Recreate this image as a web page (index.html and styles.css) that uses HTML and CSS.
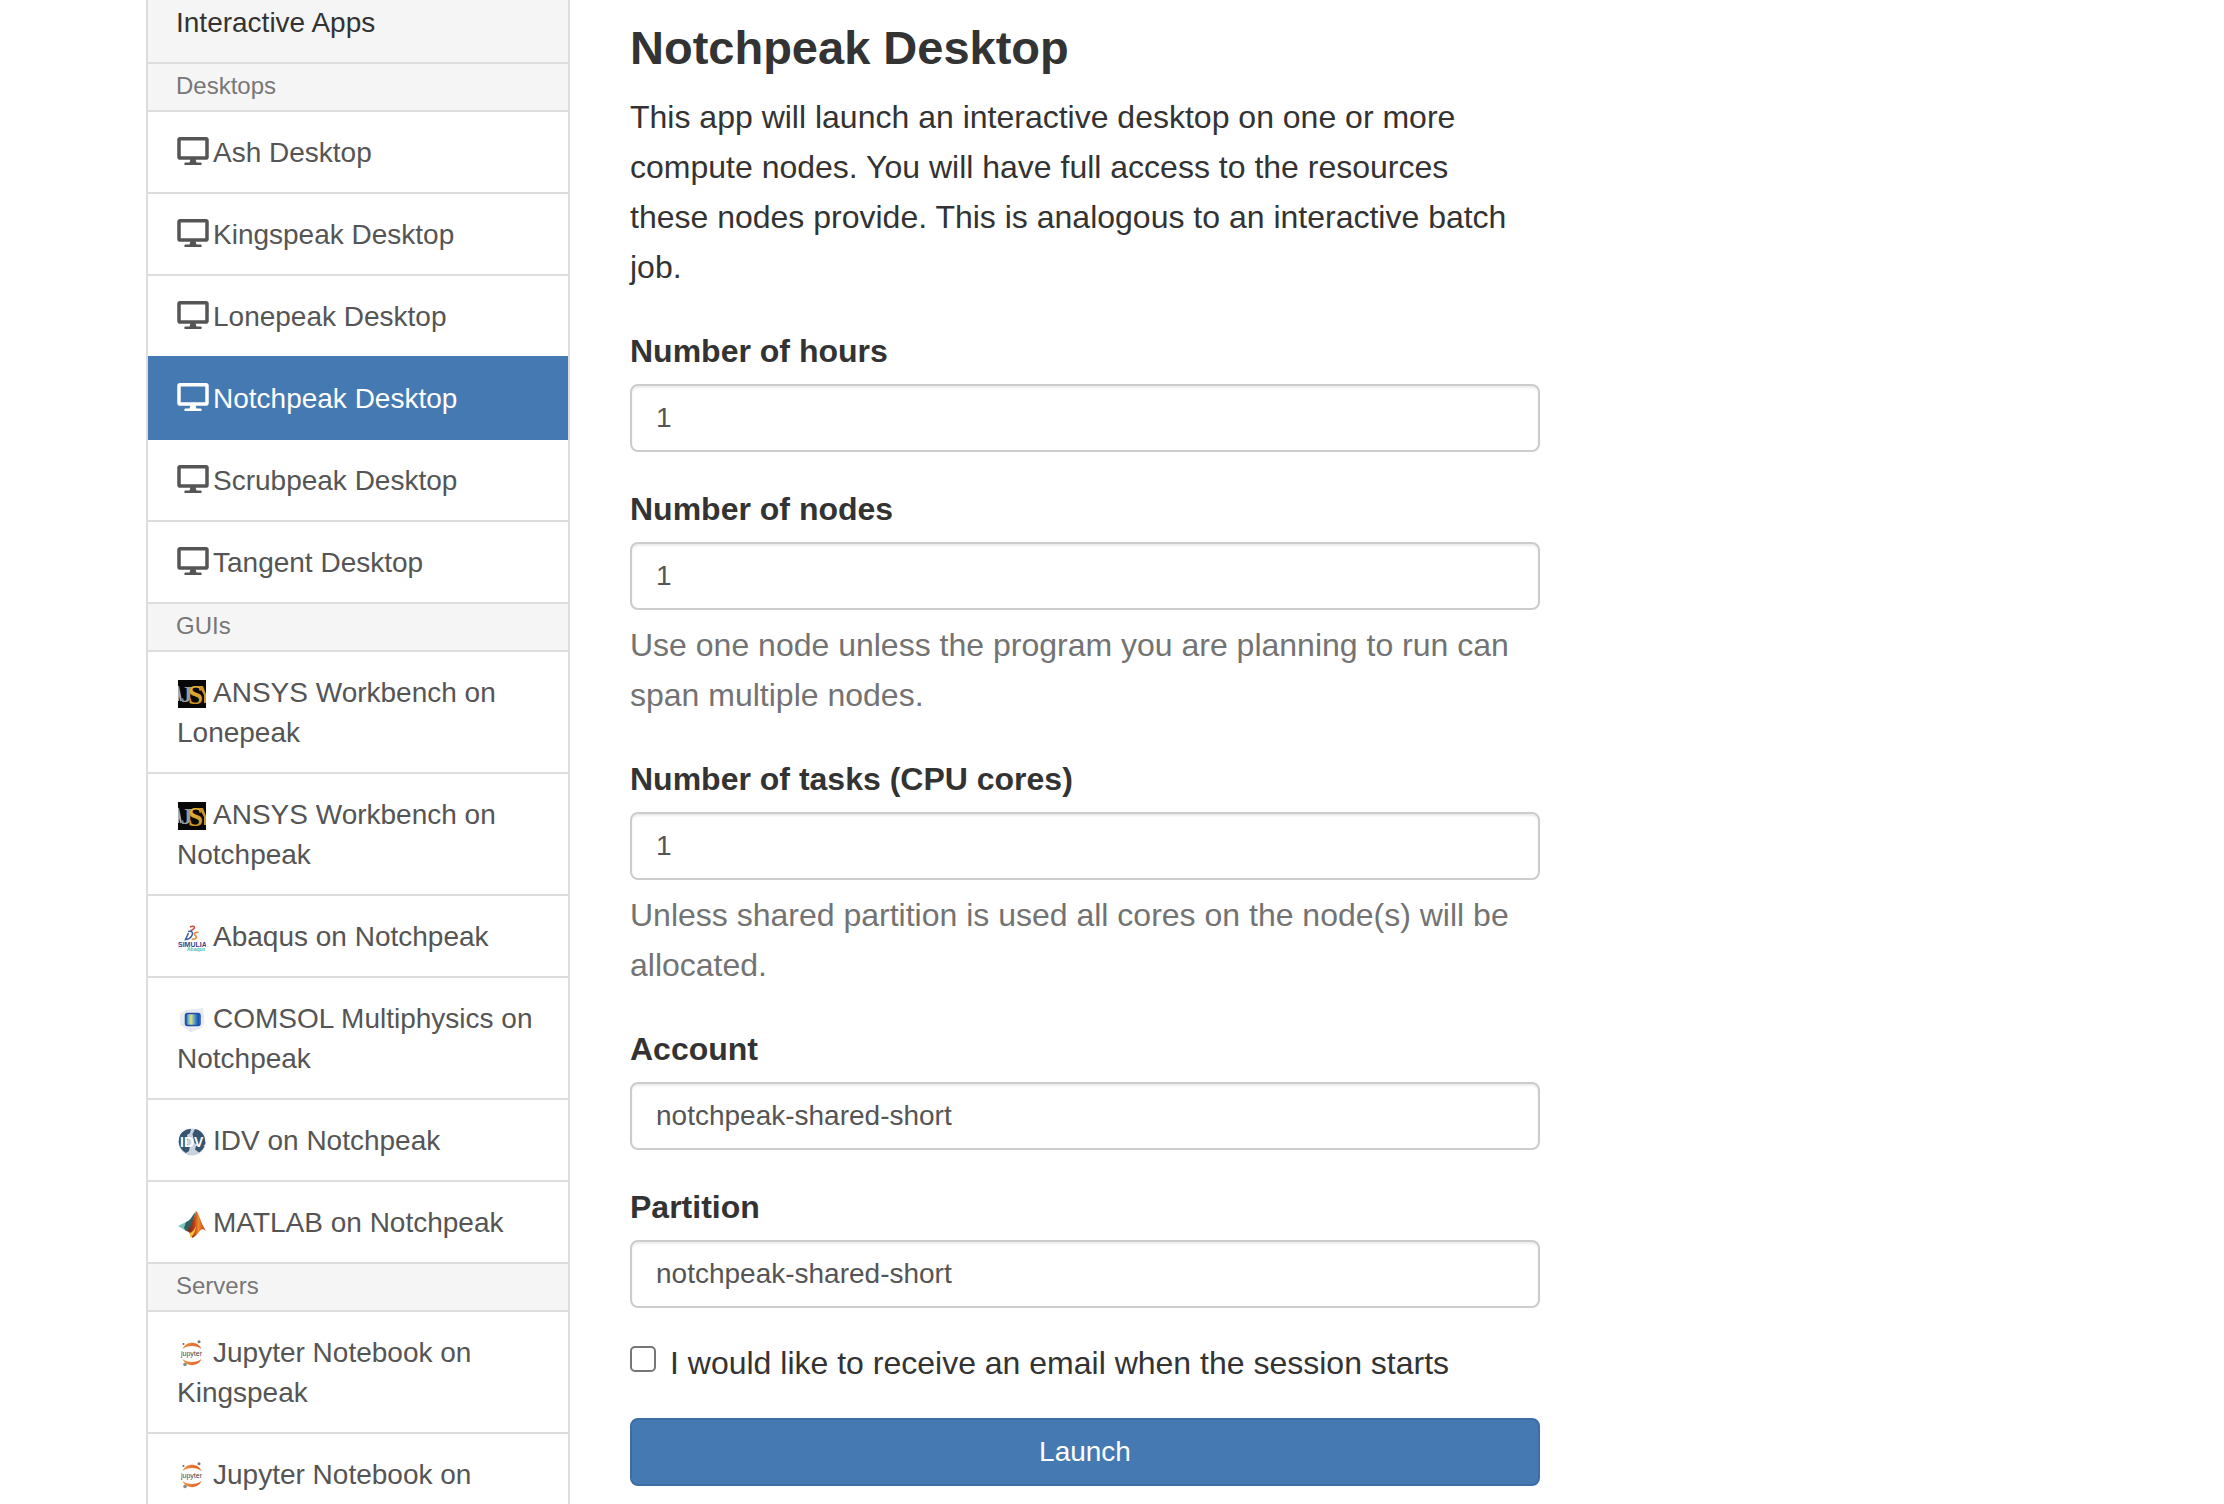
FILE: index.html
```html
<!DOCTYPE html>
<html lang="en">
<head>
<meta charset="utf-8">
<meta name="viewport" content="width=device-width, initial-scale=1">
<title>Notchpeak Desktop</title>
<link rel="stylesheet" href="styles.css">
</head>
<body>
<svg class="sprite" aria-hidden="true">
  <symbol id="desktop" viewBox="0 0 576 512"><path fill="currentColor" d="M528 0H48C21.500 0 0 21.500 0 48v320c0 26.500 21.500 48 48 48h192l-16 48h-72c-13.300 0-24 10.700-24 24s10.700 24 24 24h272c13.300 0 24-10.700 24-24s-10.700-24-24-24h-72l-16-48h192c26.500 0 48-21.500 48-48V48c0-26.500-21.500-48-48-48zm-16 352H64V64h448v288z"/></symbol>
  <linearGradient id="gold" x1="0" y1="0" x2="0" y2="1"><stop offset="0" stop-color="#f0c040"/><stop offset="1" stop-color="#c08a20"/></linearGradient>
  <linearGradient id="screen"><stop offset="0" stop-color="#123f9c"/><stop offset=".2" stop-color="#6fb6c8"/><stop offset=".4" stop-color="#e8e070"/><stop offset=".7" stop-color="#3c8fd8"/><stop offset="1" stop-color="#0b3a9a"/></linearGradient>
  <linearGradient id="flame"><stop offset="0" stop-color="#5a1f1a"/><stop offset=".4" stop-color="#b83a18"/><stop offset=".62" stop-color="#f08a2c"/><stop offset="1" stop-color="#b5361a"/></linearGradient>
  <linearGradient id="ring"><stop offset="0" stop-color="#f0913f"/><stop offset="1" stop-color="#dc5f2b"/></linearGradient>
</svg>
<div class="page">
  <nav class="apps" aria-label="Interactive Apps">
    <div class="apps-title">Interactive Apps</div>
    <div class="group">Desktops</div>
    <a class="app" href="#"><svg class="glyph"><use href="#desktop"/></svg>Ash Desktop</a>
    <a class="app" href="#"><svg class="glyph"><use href="#desktop"/></svg>Kingspeak Desktop</a>
    <a class="app" href="#"><svg class="glyph"><use href="#desktop"/></svg>Lonepeak Desktop</a>
    <a class="app active" href="#" aria-current="page"><svg class="glyph"><use href="#desktop"/></svg>Notchpeak Desktop</a>
    <a class="app" href="#"><svg class="glyph"><use href="#desktop"/></svg>Scrubpeak Desktop</a>
    <a class="app" href="#"><svg class="glyph"><use href="#desktop"/></svg>Tangent Desktop</a>
    <div class="group">GUIs</div>
    <a class="app" href="#"><svg class="logo" viewBox="0 0 28 28" aria-hidden="true">
      <rect width="28" height="28" fill="#080808"/>
      <path d="M0 7v14M0 6l3 15" stroke="#a9a9ab" stroke-width="2"/>
      <text x="3" y="22" class="mark-serif" font-size="23" fill="#9a9a9e">J</text>
      <text x="10" y="24" class="mark-serif" font-size="27" fill="url(#gold)">S</text>
      <path d="M21 6h4l3 8v9h-2v-8z" fill="#c8952a"/>
    </svg>ANSYS Workbench on Lonepeak</a>
    <a class="app" href="#"><svg class="logo" viewBox="0 0 28 28" aria-hidden="true">
      <rect width="28" height="28" fill="#080808"/>
      <path d="M0 7v14M0 6l3 15" stroke="#a9a9ab" stroke-width="2"/>
      <text x="3" y="22" class="mark-serif" font-size="23" fill="#9a9a9e">J</text>
      <text x="10" y="24" class="mark-serif" font-size="27" fill="url(#gold)">S</text>
      <path d="M21 6h4l3 8v9h-2v-8z" fill="#c8952a"/>
    </svg>ANSYS Workbench on Notchpeak</a>
    <a class="app" href="#"><svg class="logo" viewBox="0 0 28 28" aria-hidden="true">
      <path d="M12 3c3-1.500 5.500-.5 4 1.500-.7 1-2 1.700-3.500 2.300" fill="none" stroke="#d04a48" stroke-width="1.500"/>
      <path d="M10 7.500c4-.8 5.500 1 4 3.800-1.200 2.300-3.500 4-6.500 4.200l3-6.500" fill="none" stroke="#3f62a8" stroke-width="1.600"/>
      <path d="M20.500 8.500c-3-.6-5 .7-3.800 2.300 1.300 1.500 2.500 2.400 1 3.600-1 .8-2.500 1-4 .8" fill="none" stroke="#e08a3c" stroke-width="1.600"/>
      <text x="0" y="23" class="mark" font-size="7" fill="#3a4389">SIMULIA</text>
      <text x="9" y="27" class="mark" font-size="5" fill="#48c0b8">Abaqus</text>
    </svg>Abaqus on Notchpeak</a>
    <a class="app" href="#"><svg class="logo" viewBox="0 0 28 28" aria-hidden="true">
      <path d="M1.500 8 8 4l17-2L26.500 17 23 22.500 13 26 2.500 19z" fill="#e9ebef"/>
      <path d="m8 4 5 22M26 10 3 19" stroke="#dcdfe5" stroke-width="1"/>
      <rect x="7.500" y="8" width="14" height="11" rx="1" fill="url(#screen)"/>
      <rect x="7.500" y="7.500" width="14.500" height="12" rx="2" fill="none" stroke="#1c4fb0" stroke-width="1.500"/>
    </svg>COMSOL Multiphysics on Notchpeak</a>
    <a class="app" href="#"><svg class="logo" viewBox="0 0 28 28" aria-hidden="true">
      <circle cx="14" cy="14" r="13.500" fill="#c9d3e0"/>
      <path d="M4 4.500C7 1.500 11 .5 13 1l-1 4-3 2 1 4-3 4 5 3-1 5-3 2C3 22 .5 17 .8 13 1 9 2 6.500 4 4.500zM17 1c5 1 8 4 9.500 8l1 7-4 3-7-4-2-9zM18 18l6-1 2.500 1c-1 3-3 5-5.500 6.500l-4-3z" fill="#36536f"/>
      <text x="2" y="18.500" class="mark" font-size="14" fill="#fff">IDV</text>
    </svg>IDV on Notchpeak</a>
    <a class="app" href="#"><svg class="logo" viewBox="0 0 28 28" aria-hidden="true">
      <path d="m0 16 8-4c3-1 5-4 9-10l-6 18-3 1z" fill="#7fc4bd"/>
      <path d="M8 12c4-1 6-5 10-11l-5 17-5 3-2-3z" fill="#31615f"/>
      <path d="M8 21c5-2 7-12 10.500-20C21 4 23 13 28 21c-3-3-5-2-7 1-2 2-4 5-7 6-1-4-3-7-6-7z" fill="url(#flame)"/>
      <path d="M11 23c3 0 5-3 7-7-.5 5-2 9-5.500 12-.3-2-.5-4-1.500-5z" fill="#f6bd36"/>
    </svg>MATLAB on Notchpeak</a>
    <div class="group">Servers</div>
    <a class="app" href="#"><svg class="logo" viewBox="0 0 28 28" aria-hidden="true">
      <path d="M4.500 9C8 .8 20 .8 23.500 9 19 5 9 5 4.500 9zM4.500 19c3.500 8.200 15.500 8.200 19 0-4.500 4-14.500 4-19 0z" fill="url(#ring)"/>
      <text x="3" y="16" class="mark-light" font-size="7" fill="#444">jupyter</text>
      <circle cx="21" cy="1.800" r="1.500" fill="#777"/><circle cx="5.500" cy="4" r="1" fill="#666"/><circle cx="7" cy="24.500" r="1.800" fill="#8a8a8a"/>
    </svg>Jupyter Notebook on Kingspeak</a>
    <a class="app" href="#"><svg class="logo" viewBox="0 0 28 28" aria-hidden="true">
      <path d="M4.500 9C8 .8 20 .8 23.500 9 19 5 9 5 4.500 9zM4.500 19c3.500 8.200 15.500 8.200 19 0-4.500 4-14.500 4-19 0z" fill="url(#ring)"/>
      <text x="3" y="16" class="mark-light" font-size="7" fill="#444">jupyter</text>
      <circle cx="21" cy="1.800" r="1.500" fill="#777"/><circle cx="5.500" cy="4" r="1" fill="#666"/><circle cx="7" cy="24.500" r="1.800" fill="#8a8a8a"/>
    </svg>Jupyter Notebook on Lonepeak</a>
  </nav>
  <main class="content">
    <h1>Notchpeak Desktop</h1>
    <p class="intro">This app will launch an interactive desktop on one or more compute nodes. You will have full access to the resources these nodes provide. This is analogous to an interactive batch job.</p>
    <form>
      <div class="field">
        <label for="hours">Number of hours</label>
        <input class="control" id="hours" type="number" value="1">
      </div>
      <div class="field">
        <label for="nodes">Number of nodes</label>
        <input class="control" id="nodes" type="number" value="1">
        <p class="help">Use one node unless the program you are planning to run can span multiple nodes.</p>
      </div>
      <div class="field">
        <label for="tasks">Number of tasks (CPU cores)</label>
        <input class="control" id="tasks" type="number" value="1">
        <p class="help">Unless shared partition is used all cores on the node(s) will be allocated.</p>
      </div>
      <div class="field">
        <label for="account">Account</label>
        <input class="control" id="account" type="text" value="notchpeak-shared-short">
      </div>
      <div class="field">
        <label for="partition">Partition</label>
        <input class="control" id="partition" type="text" value="notchpeak-shared-short">
      </div>
      <div class="check">
        <input id="email" type="checkbox">
        <label for="email">I would like to receive an email when the session starts</label>
      </div>
      <button class="launch" type="submit">Launch</button>
    </form>
  </main>
</div>
</body>
</html>
```
FILE: styles.css
```css
* {
  box-sizing: border-box;
}

body {
  margin: 0;
  height: 100vh;
  overflow: hidden;
  background: #fff;
  color: #333;
  font-family: "Liberation Sans", Arial, sans-serif;
  font-size: 32px;
  line-height: 50px;
}

.sprite {
  position: absolute;
  width: 0;
  height: 0;
}

.page {
  display: grid;
  grid-template-columns: 484fr 970fr 484fr;
  align-items: start;
  padding: 0 170px 0 116px;
}

/* Sidebar */
.apps {
  margin: 0 30px;
  border: 2px solid #ddd;
  border-top: 0;
  font-size: 28px;
  line-height: 40px;
}

.apps-title {
  padding: 3px 28px 19px;
  background: #f5f5f5;
}

.group {
  padding: 5px 28px 7px;
  border-top: 2px solid #ddd;
  background: #f5f5f5;
  color: #777;
  font-size: 24px;
  line-height: 34px;
}

.app {
  display: block;
  padding: 21px 20px 19px 29px;
  border-top: 2px solid #ddd;
  color: #555;
  text-decoration: none;
}

.app.active {
  border-color: #4579b2;
  background: #4579b2;
  color: #fff;
}

.app.active + .app {
  border-color: #4579b2;
}

.glyph {
  width: 32px;
  height: 28px;
  margin: 0 4px 0 0;
  vertical-align: -3px;
}

.logo {
  width: 28px;
  height: 28px;
  margin: 0 7px 0 1px;
  vertical-align: -6px;
}

.mark {
  font-family: "Liberation Sans", Arial, sans-serif;
  font-weight: bold;
}

.mark-light {
  font-family: "Liberation Sans", Arial, sans-serif;
}

.mark-serif {
  font-family: "Liberation Serif", serif;
  font-weight: bold;
}

/* Launch form */
.content {
  padding: 22px 30px 0;
}

h1 {
  margin: 0 0 18px;
  font-size: 47px;
  line-height: 52px;
}

.intro {
  margin: 0 0 34px;
  padding-right: 16px;
}

.field {
  margin-bottom: 32px;
}

.field label {
  display: block;
  margin-bottom: 8px;
  font-weight: bold;
}

.control {
  display: block;
  width: 100%;
  height: 68px;
  padding: 12px 24px;
  border: 2px solid #ccc;
  border-radius: 8px;
  background: #fff;
  box-shadow: inset 0 2px 2px rgba(0, 0, 0, .075);
  color: #555;
  font: 28px/40px "Liberation Sans", Arial, sans-serif;
  appearance: textfield;
}

.help {
  margin: 10px 0 0;
  padding-bottom: 2px;
  color: #737373;
}

.check {
  display: flex;
  gap: 14px;
  margin-bottom: 32px;
}

.check label {
  line-height: 46px;
}

.check input {
  appearance: none;
  flex: none;
  width: 26px;
  height: 26px;
  margin: 6px 0 0;
  border: 2px solid #767676;
  border-radius: 5px;
  background: #fff;
}

.launch {
  display: block;
  width: 100%;
  height: 68px;
  padding: 12px 24px;
  border: 2px solid #3e6da3;
  border-radius: 8px;
  background: #4579b2;
  color: #fff;
  font: 28px/40px "Liberation Sans", Arial, sans-serif;
}
```
